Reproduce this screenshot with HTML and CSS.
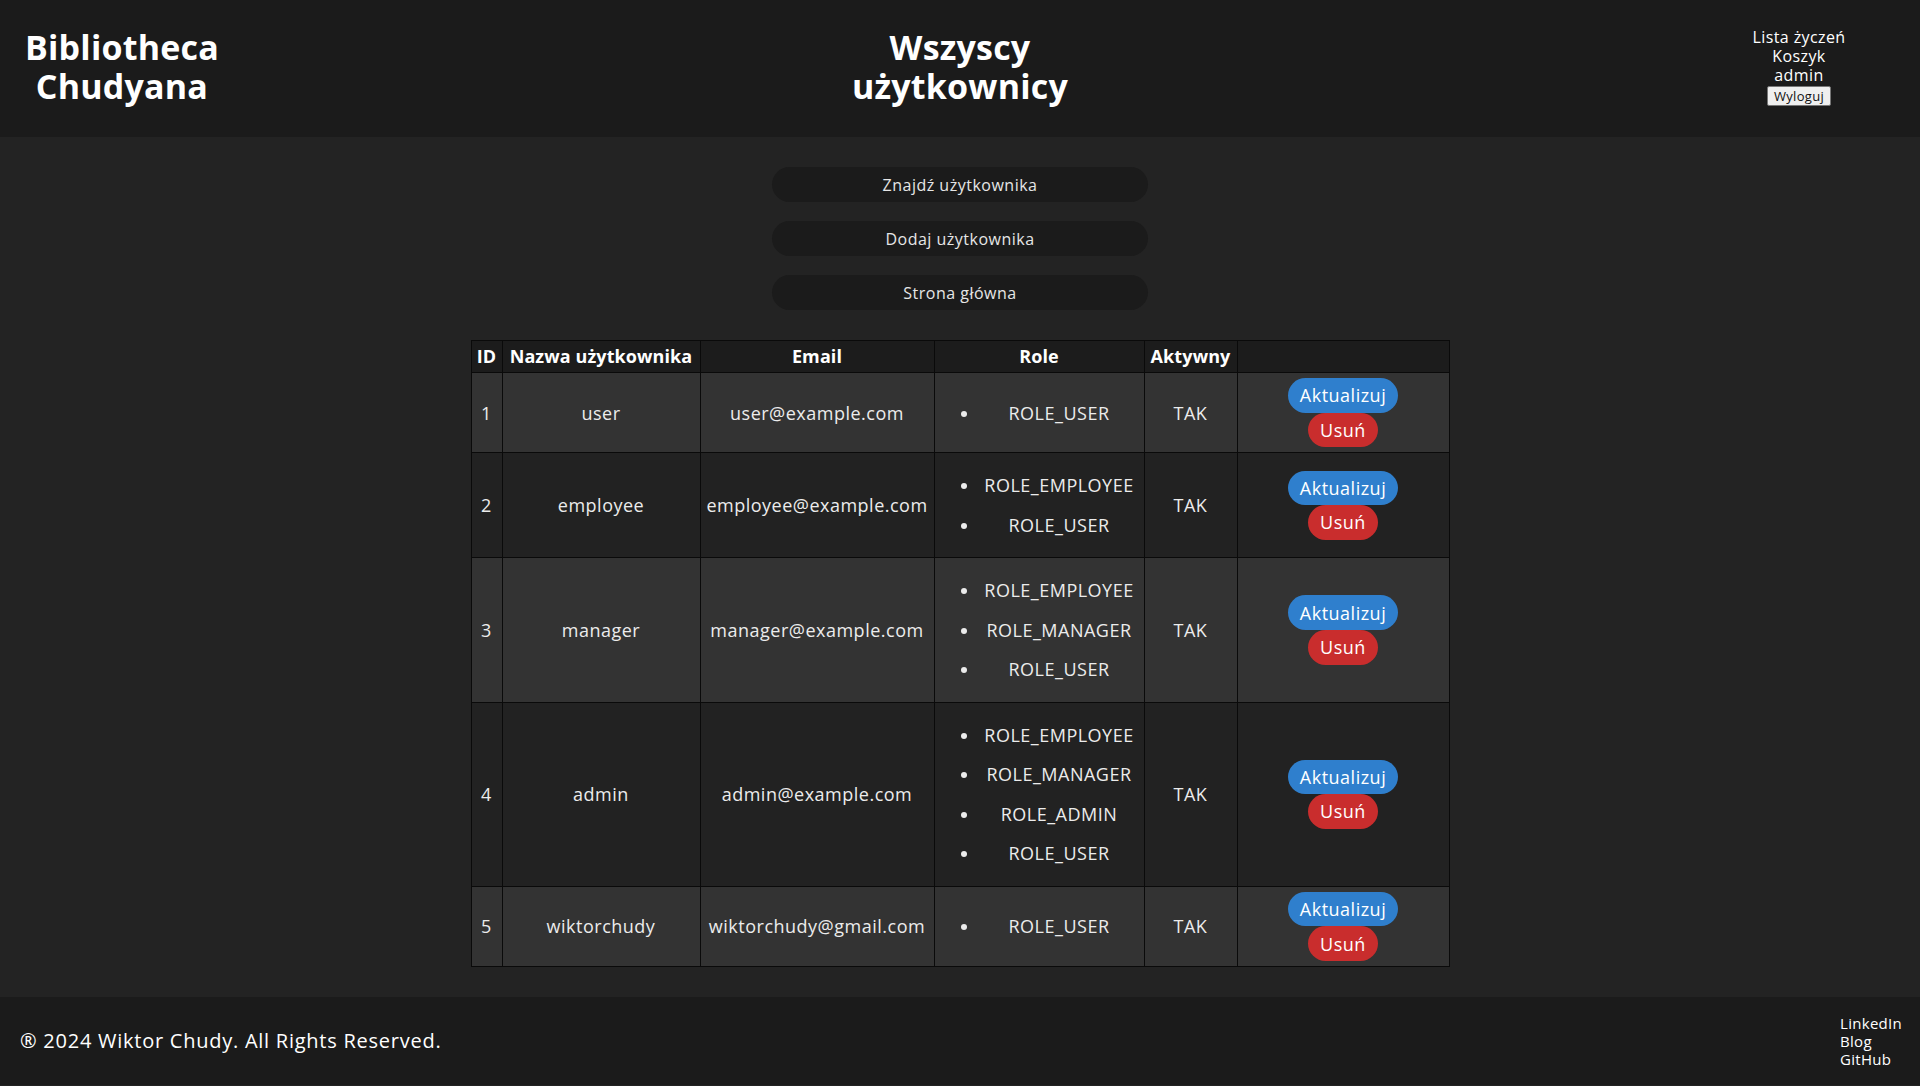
FILE: index.html
```html
<!DOCTYPE html>
<html lang="pl">
<head>
<meta charset="utf-8">
<title>Wszyscy użytkownicy</title>
<link rel="stylesheet" href="styles.css">
</head>
<body>
<header class="site-header">
  <h1 class="brand">Bibliotheca Chudyana</h1>
  <h1 class="page-title">Wszyscy użytkownicy</h1>
  <nav class="user-nav">
    <a href="#">Lista życzeń</a>
    <a href="#">Koszyk</a>
    <span>admin</span>
    <button class="logout" type="button">Wyloguj</button>
  </nav>
</header>
<main class="content">
  <div class="actions">
    <a class="pill-link" href="#">Znajdź użytkownika</a>
    <a class="pill-link" href="#">Dodaj użytkownika</a>
    <a class="pill-link" href="#">Strona główna</a>
  </div>
  <table class="users">
    <colgroup>
      <col class="c-id"><col class="c-name"><col class="c-email"><col class="c-role"><col class="c-active"><col class="c-act">
    </colgroup>
    <thead>
      <tr><th>ID</th><th>Nazwa użytkownika</th><th>Email</th><th>Role</th><th>Aktywny</th><th></th></tr>
    </thead>
    <tbody>
      <tr>
        <td>1</td><td>user</td><td>user@example.com</td>
        <td><ul class="roles"><li>ROLE_USER</li></ul></td>
        <td>TAK</td>
        <td><div class="row-btns"><button class="btn btn-blue">Aktualizuj</button><button class="btn btn-red">Usuń</button></div></td>
      </tr>
      <tr>
        <td>2</td><td>employee</td><td>employee@example.com</td>
        <td><ul class="roles"><li>ROLE_EMPLOYEE</li><li>ROLE_USER</li></ul></td>
        <td>TAK</td>
        <td><div class="row-btns"><button class="btn btn-blue">Aktualizuj</button><button class="btn btn-red">Usuń</button></div></td>
      </tr>
      <tr>
        <td>3</td><td>manager</td><td>manager@example.com</td>
        <td><ul class="roles"><li>ROLE_EMPLOYEE</li><li>ROLE_MANAGER</li><li>ROLE_USER</li></ul></td>
        <td>TAK</td>
        <td><div class="row-btns"><button class="btn btn-blue">Aktualizuj</button><button class="btn btn-red">Usuń</button></div></td>
      </tr>
      <tr>
        <td>4</td><td>admin</td><td>admin@example.com</td>
        <td><ul class="roles"><li>ROLE_EMPLOYEE</li><li>ROLE_MANAGER</li><li>ROLE_ADMIN</li><li>ROLE_USER</li></ul></td>
        <td>TAK</td>
        <td><div class="row-btns"><button class="btn btn-blue">Aktualizuj</button><button class="btn btn-red">Usuń</button></div></td>
      </tr>
      <tr>
        <td>5</td><td>wiktorchudy</td><td>wiktorchudy@gmail.com</td>
        <td><ul class="roles"><li>ROLE_USER</li></ul></td>
        <td>TAK</td>
        <td><div class="row-btns"><button class="btn btn-blue">Aktualizuj</button><button class="btn btn-red">Usuń</button></div></td>
      </tr>
    </tbody>
  </table>
</main>
<footer class="site-footer">
  <p class="copy">® 2024 Wiktor Chudy. All Rights Reserved.</p>
  <div class="footer-links">
    <a href="#">LinkedIn</a>
    <a href="#">Blog</a>
    <a href="#">GitHub</a>
  </div>
</footer>
</body>
</html>
```
FILE: styles.css
```css
* { box-sizing: border-box; }

body {
  margin: 0;
  background: #232323;
  color: #f2f2f2;
  font-family: "Open Sans", "Liberation Sans", sans-serif;
}

a { color: inherit; text-decoration: none; }

.site-header {
  height: 137px;
  background: #1b1b1b;
  display: grid;
  grid-template-columns: 1fr auto 1fr;
  align-items: center;
  padding: 0 25px 3px;
}

.brand, .page-title {
  margin: 0;
  width: min-content;
  font-size: 34px;
  line-height: 39px;
  font-weight: 700;
  text-align: center;
  color: #fff;
  letter-spacing: 0.2px;
}

.brand { justify-self: start; }
.page-title { justify-self: center; }

.user-nav {
  justify-self: end;
  margin-right: 48px;
  display: flex;
  flex-direction: column;
  align-items: center;
  font-size: 16px;
  line-height: 19px;
  letter-spacing: 0.4px;
  color: #fff;
  width: 96px;
}

.logout {
  font-family: inherit;
  font-size: 13px;
  line-height: 16px;
  letter-spacing: 0.3px;
  padding: 1px 6px;
  margin-top: 1px;
  background: #efefef;
  color: #111;
  border: 1px solid #767676;
  border-radius: 2px;
}

.content {
  padding: 30px 0;
  display: flex;
  flex-direction: column;
  align-items: center;
  gap: 30px;
}

.actions {
  display: flex;
  flex-direction: column;
  gap: 19px;
}

.pill-link {
  width: 376px;
  height: 35px;
  border-radius: 18px;
  background: #1b1b1b;
  color: #e6e6e6;
  display: flex;
  align-items: center;
  justify-content: center;
  font-size: 16px;
  letter-spacing: 0.5px;
}

.users {
  width: 978px;
  table-layout: fixed;
  border-collapse: collapse;
  border: 1px solid #0a0a0a;
  font-size: 18px;
  letter-spacing: 0.5px;
  color: #ececec;
}

.c-id { width: 31px; }
.c-name { width: 198px; }
.c-email { width: 234px; }
.c-role { width: 210px; }
.c-active { width: 93px; }
.c-act { width: 212px; }

.users th, .users td {
  border: 1px solid #0a0a0a;
  padding: 5px;
  text-align: center;
  vertical-align: middle;
  white-space: nowrap;
}

.users th {
  background: #1c1c1c;
  font-weight: 700;
  color: #fff;
  line-height: 21px;
  letter-spacing: 0.1px;
}

.users td { line-height: 22px; }

.users tbody tr:nth-child(odd) td { background: #333333; }
.users tbody tr:nth-child(even) td { background: #222222; }

.roles {
  margin: 7.5px 0;
  padding-left: 40px;
}

.roles li {
  padding: 8.75px 0;
  line-height: 22px;
}

.row-btns {
  display: flex;
  flex-direction: column;
  align-items: center;
}

.btn {
  font-family: inherit;
  font-size: 18px;
  line-height: 22px;
  letter-spacing: 0.5px;
  padding: 6.3px 12px;
  border: none;
  border-radius: 18px;
  color: #fff;
}

.btn-blue { background: #2f7fcd; }
.btn-red { background: #c92d2d; }

.site-footer {
  height: 88px;
  background: #1b1b1b;
  display: flex;
  align-items: center;
  justify-content: space-between;
  padding: 0 20px;
}

.copy {
  margin: 0;
  font-size: 20px;
  letter-spacing: 0.75px;
  color: #fff;
}

.footer-links {
  display: flex;
  flex-direction: column;
  font-size: 15px;
  line-height: 18px;
  letter-spacing: 0.3px;
  width: 60px;
  color: #fff;
}
```
